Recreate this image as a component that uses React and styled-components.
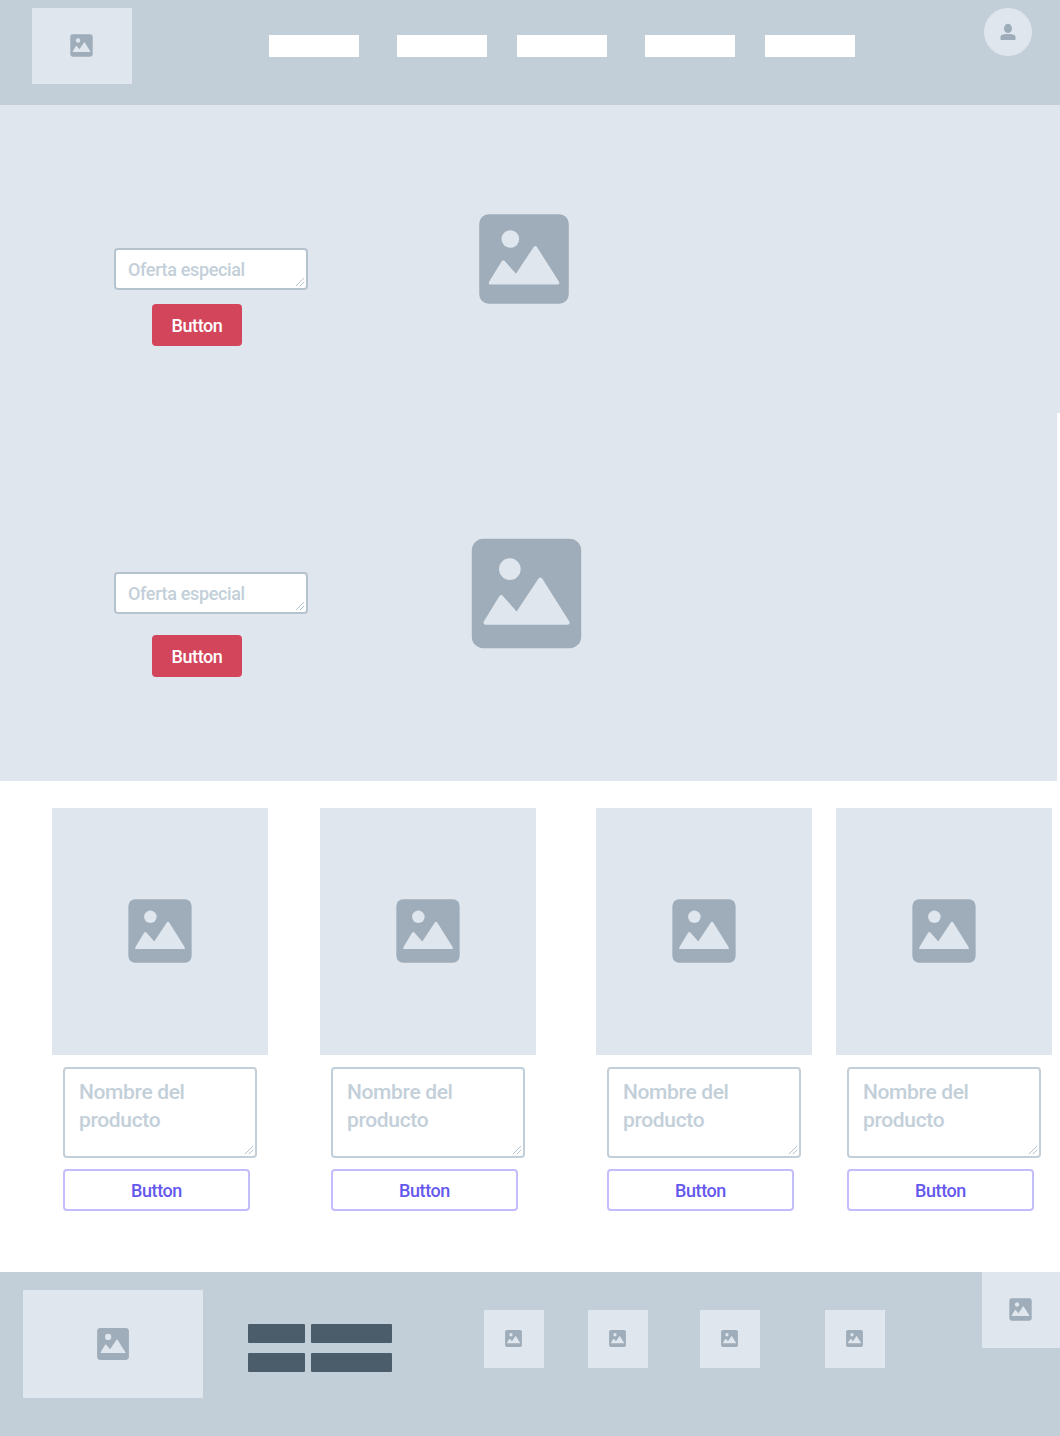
import React from "react";
import styled, { createGlobalStyle } from "styled-components";

const Global = createGlobalStyle`
  * { box-sizing: border-box; }
  body { margin: 0; background: #fff; font-family: Roboto, "Liberation Sans", sans-serif; font-weight: 500; }
  svg { display: block; flex: none; }
`;

const Page = styled.div`
  width: 1060px;
  height: 1436px;
  display: flex;
  flex-direction: column;
  overflow: hidden;
`;

const Header = styled.header`
  height: 105px;
  display: flex;
  align-items: flex-start;
  padding: 8px 28px 0 32px;
  background: #c3cfd8;
`;

const Placeholder = styled.div`
  flex: none;
  width: ${(p) => p.$w}px;
  height: ${(p) => p.$h}px;
  margin-left: ${(p) => p.$left || 0}px;
  display: flex;
  align-items: center;
  justify-content: center;
  padding: 0 ${(p) => p.$nudge || 0}px ${(p) => p.$nudge || 0}px 0;
  background: #dfe6ee;
`;

const Nav = styled.nav`
  display: flex;
  margin: 27px 0 0 137px;
`;

const NavItem = styled.div`
  width: 90px;
  height: 22px;
  margin-right: ${(p) => p.$gap}px;
  background: #fff;
`;

const Avatar = styled.div`
  width: 48px;
  height: 48px;
  margin-left: auto;
  border-radius: 50%;
  background: #dfe6ee;
`;

const Hero = styled.section`
  display: flex;
  width: ${(p) => p.$w}px;
  height: ${(p) => p.$h}px;
  padding-left: 114px;
  background: #dfe6ee;
`;

const Offer = styled.div`
  width: 194px;
  display: flex;
  flex-direction: column;
  align-items: flex-start;
  padding-top: ${(p) => p.$top}px;
`;

const HeroImage = styled.div`
  display: flex;
  align-items: flex-start;
  padding: ${(p) => p.$top}px 0 0 ${(p) => p.$left}px;
`;

const Field = styled.div`
  width: 194px;
  height: ${(p) => (p.$large ? 91 : 42)}px;
  display: flex;
  justify-content: space-between;
  align-items: flex-end;
  border: 2px solid ${(p) => (p.$large ? "#c3cfd8" : "#b5c3cf")};
  border-radius: 4px;
  padding: 0 1px 1px ${(p) => (p.$large ? 14 : 12)}px;
  background: #fff;
`;

const FieldText = styled.span`
  align-self: flex-start;
  width: 140px;
  padding-top: ${(p) => (p.$large ? 9 : 8)}px;
  color: #c3cfd9;
  font-size: ${(p) => (p.$large ? 21 : 18)}px;
  line-height: ${(p) => (p.$large ? 28 : 24)}px;
  letter-spacing: -0.35px;
`;

const RedButton = styled.button`
  width: 90px;
  height: 42px;
  margin: ${(p) => p.$gap}px 0 0 38px;
  padding: 0;
  border: 0;
  border-radius: 4px;
  background: #d3455b;
  color: #fff;
  font: 500 18px Roboto, sans-serif;
  letter-spacing: -0.4px;
`;

const Products = styled.section`
  height: 491px;
  display: flex;
  align-items: flex-start;
  padding: 27px 0 0 52px;
`;

const Product = styled.article`
  flex: none;
  width: 216px;
  margin-right: ${(p) => p.$gap}px;
`;

const ProductInfo = styled.div`
  display: flex;
  flex-direction: column;
  gap: 11px;
  padding: 12.4px 0 0 11px;
`;

const OutlineButton = styled.button`
  width: 187px;
  height: 42px;
  padding: 2px 0 0;
  border: 2px solid #c3bdfb;
  border-radius: 4px;
  background: #fff;
  color: #6558ee;
  font: 500 18px Roboto, sans-serif;
  letter-spacing: -0.4px;
`;

const Footer = styled.footer`
  height: 164px;
  display: flex;
  align-items: flex-start;
  background: #c3cfd8;
`;

const FooterLogo = styled.div`
  padding: 18px 0 0 23px;
`;

const Links = styled.div`
  display: grid;
  grid-template-columns: 57px 81.3px;
  grid-auto-rows: 19.6px;
  gap: 9.4px 6px;
  margin: 51.7px 0 0 45px;
`;

const LinkBlock = styled.div`
  border-radius: 1px;
  background: #4b5c6a;
`;

const Socials = styled.div`
  display: flex;
  width: 589.7px;
  padding: 38px 0 0 91.7px;
`;

function Picture({ size, frame = Math.ceil(size) }) {
  const inset = (frame - size) / 2;
  return (
    <svg width={frame} height={frame}>
      <g transform={`translate(${inset} ${inset}) scale(${size / 90})`}>
        <rect width="90" height="90" rx="9.5" fill="#9eadb9" />
        <circle cx="31.3" cy="24.9" r="8.9" fill="#dfe6ee" />
        <path
          d="M11.2 70.7Q9 70.7 9.9 68L22.6 47.3Q24 45.4 25.6 47L36.9 59.8L54.9 32.7Q56.4 31 57.9 32.7L80.2 68Q81.2 70.7 78.8 70.7Z"
          fill="#dfe6ee"
        />
      </g>
    </svg>
  );
}

function TextField({ large, children }) {
  return (
    <Field $large={large}>
      <FieldText $large={large}>{children}</FieldText>
      <svg width="10" height="10" viewBox="0 0 10 10" fill="none" stroke="#b5c3cf">
        <path d="M.8 9.2L9.2 .8M4.8 9.2L9.2 4.8" />
      </svg>
    </Field>
  );
}

const navGaps = [38, 30, 38, 30, 0];
const productGaps = [52, 60, 24, 0];
const socialOffsets = [0, 44, 52, 65];

export default function App() {
  return (
    <Page>
      <Global />
      <Header>
        <Placeholder $w={100} $h={76} $nudge={1}>
          <Picture size={22.4} />
        </Placeholder>
        <Nav>
          {navGaps.map((gap, i) => (
            <NavItem key={i} $gap={gap} />
          ))}
        </Nav>
        <Avatar>
          <svg width="48" height="48" viewBox="0 0 48 48" fill="#9eadb9">
            <ellipse cx="24" cy="20.4" rx="4" ry="4.6" />
            <path d="M16.5 32V29C16.5 26.8 19.5 26 24 26S31.5 26.8 31.5 29V32Z" />
          </svg>
        </Avatar>
      </Header>

      <Hero $w={1060} $h={308}>
        <Offer $top={143}>
          <TextField>Oferta especial</TextField>
          <RedButton $gap={14}>Button</RedButton>
        </Offer>
        <HeroImage $top={109} $left={171}>
          <Picture size={89.5} />
        </HeroImage>
      </Hero>
      <Hero $w={1057} $h={368}>
        <Offer $top={159}>
          <TextField>Oferta especial</TextField>
          <RedButton $gap={21}>Button</RedButton>
        </Offer>
        <HeroImage $top={125} $left={163}>
          <Picture size={109.4} frame={111} />
        </HeroImage>
      </Hero>

      <Products>
        {productGaps.map((gap, i) => (
          <Product key={i} $gap={gap}>
            <Placeholder $w={216} $h={246.6}>
              <Picture size={63.3} />
            </Placeholder>
            <ProductInfo>
              <TextField large>Nombre del producto</TextField>
              <OutlineButton>Button</OutlineButton>
            </ProductInfo>
          </Product>
        ))}
      </Products>

      <Footer>
        <FooterLogo>
          <Placeholder $w={180} $h={108}>
            <Picture size={31.8} />
          </Placeholder>
        </FooterLogo>
        <Links>
          <LinkBlock />
          <LinkBlock />
          <LinkBlock />
          <LinkBlock />
        </Links>
        <Socials>
          {socialOffsets.map((left, i) => (
            <Placeholder key={i} $w={60} $h={58} $left={left} $nudge={1}>
              <Picture size={16.8} />
            </Placeholder>
          ))}
        </Socials>
        <Placeholder $w={78} $h={76} $nudge={1}>
          <Picture size={22.4} />
        </Placeholder>
      </Footer>
    </Page>
  );
}
